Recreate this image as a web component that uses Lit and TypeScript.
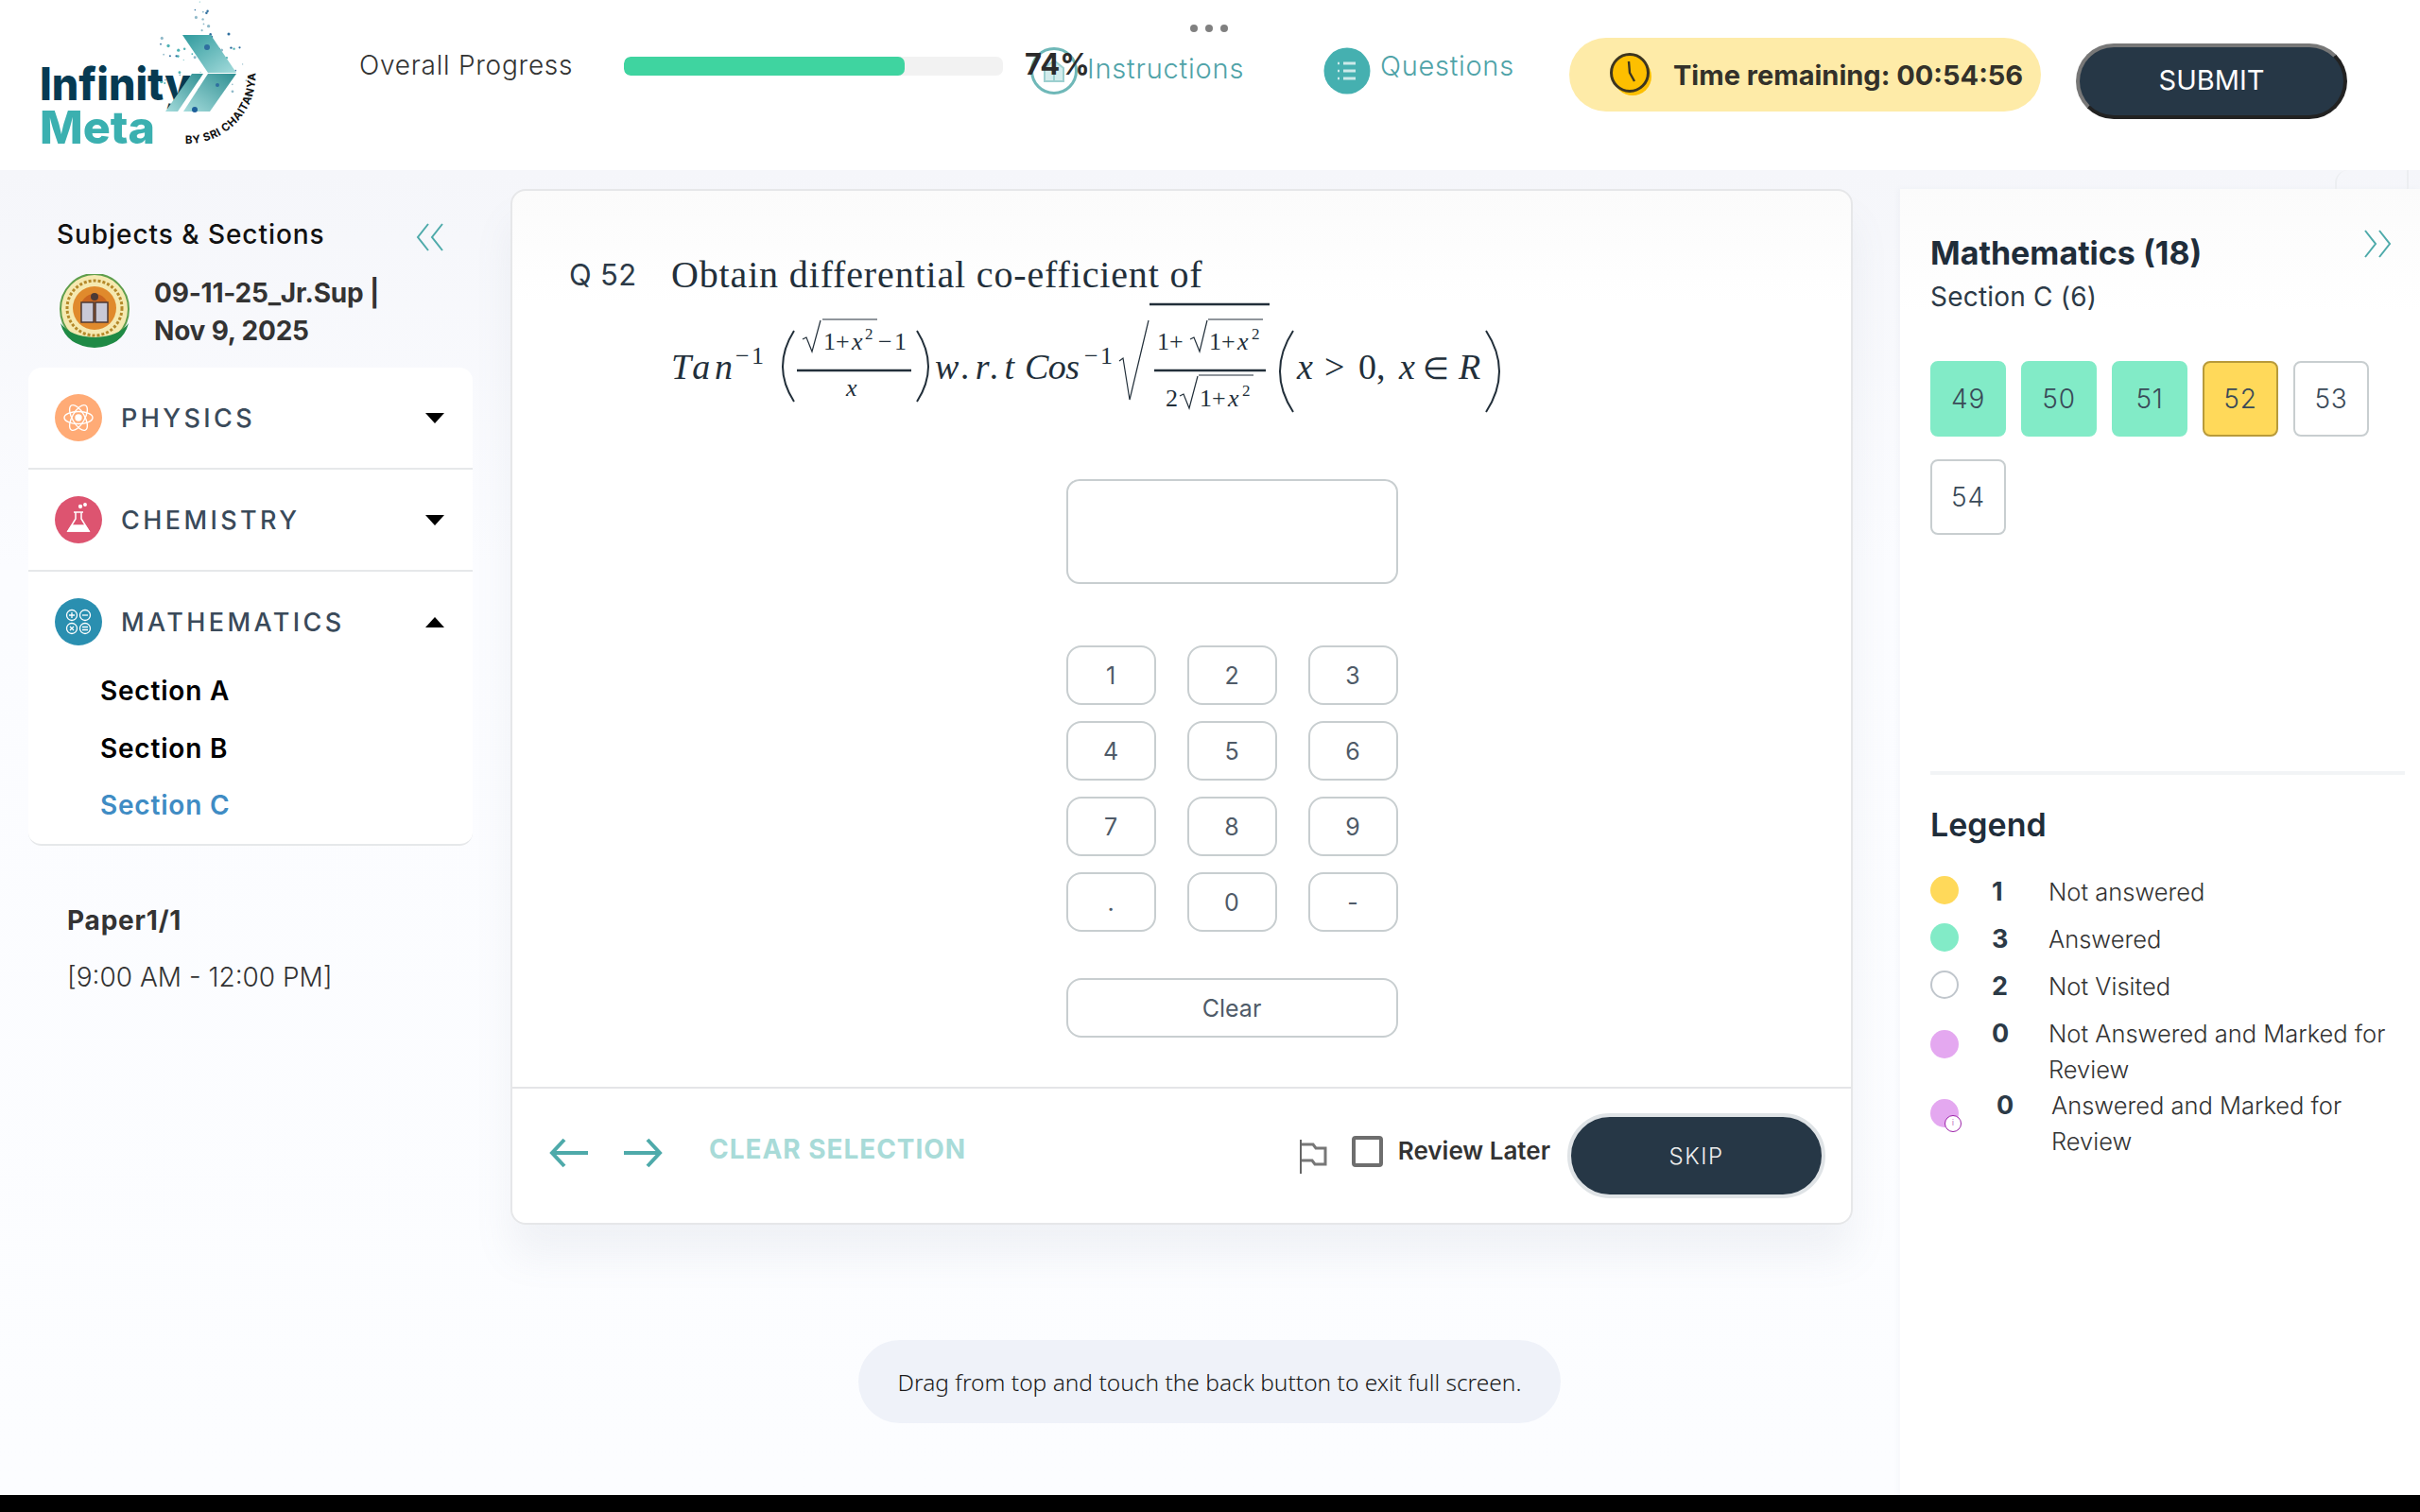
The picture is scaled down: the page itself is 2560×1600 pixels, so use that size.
import { LitElement, css, html, svg } from "lit";
import { customElement } from "lit/decorators.js";

const TEAL = "#4eaaaa";

// scatter of particles around the logo chevron, fixed seed so it stays stable
function particles() {
  const out = [];
  let s = 11;
  const rnd = () => {
    s = (s * 16807) % 2147483647;
    return s / 2147483647;
  };
  for (let i = 0; i < 80; i++) {
    const x = 170 + rnd() * 95;
    const y = 2 + rnd() * 100;
    // keep the particles in a rough cloud narrowing towards the top
    if (y < 40 && (x < 190 + (40 - y) / 2 || x > 245 - (40 - y) / 3)) continue;
    const r = 0.5 + rnd() * 1.2;
    const c = i % 3 === 0 ? "#2f6f9f" : i % 3 === 1 ? "#4fb3b5" : "#8fb9c9";
    out.push(svg`<circle cx=${x} cy=${y} r=${r} fill=${c}></circle>`);
  }
  return out;
}

const logo = html`<svg class="logo" viewBox="0 0 290 180" width="290" height="180">
  <defs>
    <linearGradient id="chev" x1="0" y1="0" x2="1" y2="1">
      <stop offset="0" stop-color="#2f9a9d"></stop>
      <stop offset="1" stop-color="#a5dcdc"></stop>
    </linearGradient>
    <linearGradient id="chev2" x1="1" y1="0" x2="0" y2="1">
      <stop offset="0" stop-color="#2f8f92"></stop>
      <stop offset="1" stop-color="#a5dcdc"></stop>
    </linearGradient>
  </defs>
  ${particles()}
  <text x="42" y="106" class="lg-a" textLength="160" lengthAdjust="spacingAndGlyphs">Infinity</text>
  <polygon points="193,37 223,37 250,77 220,77" fill="url(#chev)"></polygon>
  <polygon points="220,78 250,78 222,118 194,118" fill="url(#chev2)"></polygon>
  <polygon points="203,78 215,78 188,118 175,118" fill="url(#chev2)"></polygon>
  <circle cx="219" cy="50" r="3" fill="#2f6f9f"></circle>
  <circle cx="206" cy="116" r="3" fill="#1d5f9a"></circle>
  <circle cx="230" cy="90" r="2" fill="#2f6f9f"></circle>
  <text x="42" y="152" class="lg-b" textLength="122" lengthAdjust="spacingAndGlyphs">Meta</text>
  <path id="arc" d="M196 152 A72 72 0 0 0 270 74" fill="none"></path>
  <text class="lg-c"><textPath href="#arc">BY SRI CHAITANYA</textPath></text>
</svg>`;

const seal = html`<svg viewBox="0 0 76 80" width="76" height="80">
  <ellipse cx="38" cy="37" rx="36" ry="37" fill="#f5e9b0" stroke="#5f9e4c" stroke-width="2"></ellipse>
  <circle cx="38" cy="36" r="29" fill="none" stroke="#b5892a" stroke-width="3" stroke-dasharray="3 2"></circle>
  <circle cx="38" cy="36" r="23" fill="#e08a2c"></circle>
  <circle cx="38" cy="36" r="15" fill="#c9651f"></circle>
  <rect x="24" y="30" width="13" height="21" fill="#c9c9d6" stroke="#4c3a36" stroke-width="1.5"></rect>
  <rect x="39" y="30" width="13" height="21" fill="#c9c9d6" stroke="#4c3a36" stroke-width="1.5"></rect>
  <circle cx="38" cy="24" r="4" fill="#4c3a36"></circle>
  <path d="M2 52 Q8 76 38 78 Q68 76 74 52 Q64 66 38 67 Q12 66 2 52Z" fill="#1f8a45"></path>
</svg>`;

const chevrons = (dir: "left" | "right") =>
  html`<svg class="chev" viewBox="0 0 30 30" width="30" height="30">
    <path
      d=${dir === "left" ? "M13 1 L2 15 L13 29 M28 1 L17 15 L28 29" : "M2 1 L13 15 L2 29 M17 1 L28 15 L17 29"}
      fill="none"
      stroke="#4eaaaa"
      stroke-width="2"
    ></path>
  </svg>`;

const atom = svg`<g fill="none" stroke="#fff" stroke-width="1.4">
  <ellipse cx="25" cy="25" rx="15" ry="6.5"></ellipse>
  <ellipse cx="25" cy="25" rx="15" ry="6.5" transform="rotate(60 25 25)"></ellipse>
  <ellipse cx="25" cy="25" rx="15" ry="6.5" transform="rotate(120 25 25)"></ellipse>
  <circle cx="25" cy="25" r="3" fill="#fff"></circle></g>`;

const flask = svg`<g fill="none" stroke="#fff" stroke-width="1.5">
  <path d="M22 17 V24 L14 37 H36 L28 24 V17 M20 17 H30"></path>
  <path d="M18 31 H32 L36 37 H14Z" fill="#fff"></path>
  <circle cx="27" cy="11" r="1.4" fill="#fff"></circle>
  <circle cx="32" cy="9" r="1.2" fill="#fff"></circle></g>`;

const ops = svg`<g fill="none" stroke="#fff" stroke-width="1.3">
  <circle cx="18" cy="18" r="5.5"></circle><path d="M15 18 H21 M18 15 V21"></path>
  <circle cx="32" cy="18" r="5.5"></circle><path d="M29 18 H35"></path>
  <circle cx="18" cy="32" r="5.5"></circle><path d="M16 30 L20 34 M20 30 L16 34"></path>
  <circle cx="32" cy="32" r="5.5"></circle><path d="M29 30.5 H35 M29 33.5 H35"></path></g>`;

const subjects = [
  { name: "PHYSICS", color: "#ffab76", icon: atom, open: false },
  { name: "CHEMISTRY", color: "#dd5470", icon: flask, open: false },
  { name: "MATHEMATICS", color: "#2a8fb0", icon: ops, open: true },
];

const palette = [
  { n: "49", cls: "done" },
  { n: "50", cls: "done" },
  { n: "51", cls: "done" },
  { n: "52", cls: "now" },
  { n: "53", cls: "" },
  { n: "54", cls: "" },
];

const legend = [
  { cls: "c-yellow", n: "1", label: "Not answered", row: "" },
  { cls: "c-green", n: "3", label: "Answered", row: "" },
  { cls: "c-empty", n: "2", label: "Not Visited", row: "" },
  { cls: "c-pink", n: "0", label: "Not Answered and Marked for Review", row: "r4" },
  { cls: "c-pink", n: "0", label: "Answered and Marked for Review", row: "r5" },
];

const keys = ["1", "2", "3", "4", "5", "6", "7", "8", "9", ".", "0", "-"];

// the formula is typeset on its own little canvas, coordinates follow the page
const formula = html`<svg class="formula" viewBox="710 310 890 130" width="890" height="130">
  <g class="m">
    <text x="710" y="398" class="it" font-size="38" textLength="65">Tan</text>
    <text x="778" y="382" font-size="26" textLength="30">−1</text>
    <path class="d" d="M840 347 Q816 385 840 422"></path>
    <path class="d" d="M970 347 Q994 385 970 422"></path>
    <path class="r" d="M843 389 H964"></path>
    <path class="t" d="M849 356 L853 354 L859 369 L868 336"></path>
    <path class="t" d="M870 335 H928"></path>
    <text x="871" y="367" font-size="26">1+</text>
    <text x="901" y="367" class="it" font-size="26">x</text>
    <text x="915" y="356" font-size="17">2</text>
    <text x="929" y="367" font-size="26" textLength="30">−1</text>
    <text x="895" y="416" class="it" font-size="26">x</text>
    <text x="989" y="398" class="it" font-size="38" textLength="84">w.r.t</text>
    <text x="1084" y="398" class="it" font-size="38" textLength="58">Cos</text>
    <text x="1147" y="382" font-size="26" textLength="30">−1</text>
    <path class="t" d="M1184 379 L1188 376 L1195 420 L1215 336"></path>
    <path class="r" d="M1216 319 H1343"></path>
    <text x="1224" y="367" font-size="26">1+</text>
    <path class="t" d="M1259 356 L1263 354 L1269 369 L1277 336"></path>
    <path class="t" d="M1278 335 H1336"></path>
    <text x="1279" y="367" font-size="26">1+</text>
    <text x="1309" y="367" class="it" font-size="26">x</text>
    <text x="1324" y="356" font-size="17">2</text>
    <path class="r" d="M1221 389 H1339"></path>
    <text x="1233" y="427" font-size="26">2</text>
    <path class="t" d="M1248 416 L1252 414 L1258 429 L1267 395"></path>
    <path class="t" d="M1268 394 H1326"></path>
    <text x="1269" y="427" font-size="26">1+</text>
    <text x="1299" y="427" class="it" font-size="26">x</text>
    <text x="1314" y="416" font-size="17">2</text>
    <path class="d" d="M1368 347 Q1340 390 1368 433"></path>
    <path class="d" d="M1572 347 Q1600 390 1572 433"></path>
    <text x="1372" y="398" class="it" font-size="38">x</text>
    <text x="1401" y="398" font-size="38">&gt;</text>
    <text x="1437" y="398" font-size="38">0,</text>
    <text x="1480" y="398" class="it" font-size="38">x</text>
    <text x="1505" y="398" font-size="32" font-family="DejaVu Sans">∈</text>
    <text x="1543" y="398" class="it" font-size="38">R</text>
  </g>
</svg>`;

@customElement("app-root")
export class AppRoot extends LitElement {
  static styles = css`
    :host {
      display: block;
      width: 2560px;
      height: 1600px;
      overflow: hidden;
      font-family: Inter, "Noto Sans", sans-serif;
      color: #263746;
      position: relative;
      background: #000;
    }
    * {
      box-sizing: border-box;
    }
    svg {
      display: block;
      flex: none;
    }

    /* top bar */
    .top {
      height: 180px;
      background: #fff;
      display: flex;
      align-items: flex-start;
      white-space: nowrap;
      position: relative;
    }
    .lg-a {
      font: 800 48px Inter, sans-serif;
      fill: #063a52;
    }
    .lg-b {
      font: 800 48px Inter, sans-serif;
      fill: #3bb0b0;
    }
    .lg-c {
      font: 700 11.5px Inter, sans-serif;
      letter-spacing: 0.6px;
      fill: #111;
    }
    .dots {
      position: absolute;
      left: 1259px;
      top: 26px;
      display: flex;
      gap: 8px;
    }
    .dots i {
      width: 8px;
      height: 8px;
      border-radius: 50%;
      background: #808080;
    }
    .overall {
      margin: 51px 0 0 90px;
      width: 280px;
      font-size: 28px;
      line-height: 36px;
      font-weight: 300;
      letter-spacing: 0.75px;
      color: #333;
    }
    .track {
      margin-top: 60px;
      width: 401px;
      height: 20px;
      border-radius: 7px;
      background: #f2f2f2;
      overflow: hidden;
    }
    .fill {
      height: 100%;
      border-radius: 7px;
      background: #3fd4a0;
    }
    .pct {
      margin: 50px 0 0 23px;
      width: 66px;
      font-size: 31px;
      line-height: 36px;
      font-weight: 700;
      color: #2b2b2b;
      position: relative;
      z-index: 1;
    }
    .tab {
      display: flex;
      align-items: center;
      gap: 10px;
      margin-top: 50px;
      height: 50px;
      font-size: 29px;
      font-weight: 300;
      color: #4fa3a8;
    }
    .tab.ins {
      margin-left: -60px;
      width: 310px;
      letter-spacing: 0.8px;
    }
    .tab.ins span {
      margin-top: -5px;
    }
    .tab.q {
      width: 260px;
      letter-spacing: 0.7px;
    }
    .tab.q span {
      margin-top: -12px;
    }
    .timer {
      width: 499px;
      height: 78px;
      margin-top: 40px;
      border-radius: 39px;
      background: #feeba8;
      display: flex;
      align-items: center;
      padding-left: 43px;
      gap: 21px;
      font-size: 29px;
      font-weight: 700;
      color: #33312a;
    }
    .submit {
      width: 287px;
      height: 80px;
      margin: 46px 0 0 37px;
      padding-bottom: 3px;
      border-radius: 40px;
      background: #263746;
      border: 4px solid;
      border-color: #777 #222 #222 #777;
      color: #fff;
      font: 400 29px Inter, sans-serif;
      display: flex;
      align-items: center;
      justify-content: center;
    }

    /* page body */
    .body {
      height: 1402px;
      display: grid;
      grid-template-columns: 540px 1420px 600px;
      background: linear-gradient(180deg, #f5f6fa 0%, #fbfcff 30%, #fcfdff 100%);
      white-space: nowrap;
    }

    /* left column */
    .side {
      padding-top: 50px;
    }
    .side-head {
      display: flex;
      justify-content: space-between;
      align-items: center;
      padding: 0 70px 0 60px;
      height: 36px;
      font-size: 28px;
      font-weight: 500;
      letter-spacing: 0.95px;
      color: #111;
    }
    .side-head svg {
      margin-top: 6px;
    }
    .exam {
      display: flex;
      gap: 25px;
      margin: 24px 0 0 62px;
      font-size: 28px;
      line-height: 40px;
      font-weight: 700;
      letter-spacing: -0.2px;
      color: #333;
    }
    .subjects {
      margin: 19px 0 0 30px;
      width: 470px;
      background: #fff;
      border-radius: 14px;
      border-bottom: 2px solid #e6e8ea;
    }
    .subject {
      border-bottom: 2px solid #e6e8ea;
    }
    .subject:last-child {
      border-bottom: 0;
    }
    .subject-head {
      display: flex;
      align-items: center;
      height: 106px;
      padding: 0 30px 0 28px;
      font-size: 27px;
      font-weight: 500;
      letter-spacing: 3.4px;
      color: #3a4a5a;
    }
    .subject-head svg {
      margin-right: 20px;
    }
    .caret {
      margin-left: auto;
      width: 0;
      height: 0;
      border-left: 10px solid transparent;
      border-right: 10px solid transparent;
      border-top: 11px solid #000;
    }
    .caret.up {
      border-top: 0;
      border-bottom: 11px solid #000;
    }
    .sections {
      margin-top: -2px;
      padding: 0 0 19px 76px;
      display: flex;
      flex-direction: column;
      gap: 16.5px;
    }
    .sections div {
      height: 44px;
      line-height: 44px;
      font-size: 28px;
      font-weight: 600;
      letter-spacing: 0.8px;
      color: #000;
    }
    .sections .on {
      color: #3f8cc4;
    }
    .paper {
      margin: 59px 0 0 71px;
      font-size: 28px;
      line-height: 40px;
      color: #333;
    }
    .paper b {
      display: block;
      font-weight: 700;
      letter-spacing: 0.8px;
      margin-bottom: 20px;
    }
    .paper span {
      font-weight: 300;
    }

    /* question card */
    .card {
      margin-top: 20px;
      height: 1096px;
      background: linear-gradient(180deg, #fbfbfb 0, #fff 120px);
      border: 2px solid #e6e7e9;
      border-radius: 16px;
      box-shadow: 0 34px 40px rgba(120, 130, 160, 0.09);
      display: flex;
      flex-direction: column;
      color: #2c3a47;
    }
    .question {
      height: 950px;
      display: flex;
      padding: 66px 62px 0 60px;
      border-bottom: 2px solid #e4e5e7;
    }
    .qno {
      width: 108px;
      font-size: 31px;
      line-height: 46px;
      letter-spacing: 0.3px;
      font-weight: 400;
    }
    .qbody {
      flex: 1;
      display: flex;
      flex-direction: column;
      align-items: center;
    }
    .qtext {
      align-self: stretch;
      font: 40px/46px "Liberation Serif", serif;
      letter-spacing: 0.85px;
      color: #222f3a;
    }
    .formula {
      align-self: flex-start;
      margin-top: -1px;
    }
    .m text {
      font-family: "Liberation Serif", serif;
      fill: #222f3a;
    }
    .m .it {
      font-style: italic;
    }
    .m path {
      fill: none;
      stroke: #222f3a;
    }
    .m .r {
      stroke-width: 2.4;
    }
    .m .t {
      stroke-width: 1.2;
    }
    .m .d {
      stroke-width: 2;
    }
    .answer {
      width: 351px;
      height: 111px;
      margin-top: 64px;
      border: 2px solid #c8ced0;
      border-radius: 14px;
    }
    .keys {
      width: 351px;
      margin-top: 65px;
      display: grid;
      grid-template-columns: repeat(3, 95px);
      grid-auto-rows: 63px;
      column-gap: 33px;
      row-gap: 17px;
    }
    .key,
    .clear {
      border: 2px solid #c8ced0;
      border-radius: 16px;
      display: flex;
      align-items: center;
      justify-content: center;
      font-size: 25px;
      color: #4f5b68;
    }
    .clear {
      width: 351px;
      height: 63px;
      margin-top: 49px;
    }
    .foot {
      flex: 1;
      display: flex;
      align-items: center;
      padding: 0 27px 0 39px;
    }
    .foot .arrow {
      margin-bottom: 6px;
    }
    .foot .arrow + .arrow {
      margin-left: 36px;
    }
    .clearsel {
      margin: 0 0 14px 49px;
      font-size: 28px;
      font-weight: 700;
      letter-spacing: 0.95px;
      color: #a8dbd8;
    }
    .flag {
      margin: 0 0 -2px auto;
    }
    .check {
      width: 33px;
      height: 33px;
      margin: 0 0 10px 26px;
      border: 4px solid #6e6e6e;
      border-radius: 4px;
      background: #fff;
    }
    .later {
      margin: 0 0 12px 16px;
      font-size: 26px;
      font-weight: 600;
      color: #333;
    }
    .skip {
      width: 273px;
      height: 90px;
      margin-left: 18px;
      border-radius: 45px;
      border: 4px solid #dfe3e6;
      background: #263746;
      color: #eee;
      font-size: 24px;
      font-weight: 300;
      letter-spacing: 1.5px;
      display: flex;
      align-items: center;
      justify-content: center;
    }

    /* right panel */
    .panel {
      margin: 20px 0 0 50px;
      width: 550px;
      background: linear-gradient(180deg, #fbfbfb 0, #fff 130px);
      box-shadow: -2px 0 6px rgba(120, 130, 160, 0.05);
      padding: 46px 16px 0 32px;
      position: relative;
    }
    .collapse {
      position: absolute;
      right: 12px;
      top: -20px;
      width: 78px;
      height: 20px;
      border: 2px solid #eceef1;
      border-bottom: 0;
      border-top: 0;
      border-radius: 14px 0 0 0;
    }
    .expand {
      position: absolute;
      right: 30px;
      top: 43px;
    }
    .panel h2 {
      margin: 0;
      font-size: 34px;
      line-height: 44px;
      font-weight: 700;
      color: #1f2d3a;
    }
    .panel h3 {
      margin: 4px 0 0;
      font-size: 28px;
      line-height: 40px;
      font-weight: 400;
      letter-spacing: 0.2px;
      color: #2c3a47;
    }
    .grid {
      margin-top: 48px;
      height: 438px;
      display: flex;
      flex-wrap: wrap;
      align-content: flex-start;
      gap: 24px 16px;
      border-bottom: 4px solid #f2f4f6;
    }
    .qbox {
      width: 80px;
      height: 80px;
      border: 2px solid #c8ced0;
      border-radius: 8px;
      display: flex;
      align-items: center;
      justify-content: center;
      font-size: 28px;
      font-weight: 300;
      letter-spacing: 0.8px;
      color: #3a4a58;
    }
    .qbox.done {
      background: #82ebc7;
      border-color: #82ebc7;
    }
    .qbox.now {
      background: #ffd95a;
      border-color: #b89a3a;
    }
    .legend-title {
      margin: 31px 0 0;
      font-size: 34px;
      line-height: 44px;
      font-weight: 600;
      color: #1f2d3a;
    }
    .legend {
      margin-top: 30px;
    }
    .row {
      display: grid;
      grid-template-columns: 65px 60px 1fr;
      min-height: 50px;
      font-size: 25.5px;
      line-height: 38px;
      font-weight: 300;
      color: #333;
      white-space: normal;
    }
    .row b {
      font-size: 27px;
      font-weight: 700;
      color: #2c3a47;
    }
    .dot {
      width: 30px;
      height: 30px;
      margin-top: 2px;
      border-radius: 50%;
      position: relative;
    }
    .row.r4 .dot {
      margin-top: 15px;
    }
    .row.r5 {
      grid-template-columns: 70px 58px 1fr;
    }
    .row.r5 .dot {
      margin-top: 12px;
    }
    .c-yellow {
      background: #ffd95a;
    }
    .c-green {
      background: #82ebc7;
    }
    .c-empty {
      background: #fff;
      border: 2px solid #c0c6cc;
    }
    .c-pink {
      background: #e4a8f0;
    }
    .badge {
      position: absolute;
      left: 15px;
      top: 17px;
      width: 18px;
      height: 18px;
      border-radius: 50%;
      border: 1.5px solid #9b1fa8;
      background: #fff;
      font-size: 8px;
      line-height: 15px;
      text-align: center;
      color: #9b1fa8;
    }

    .toast {
      position: absolute;
      left: 908px;
      top: 1418px;
      width: 743px;
      height: 88px;
      border-radius: 44px;
      background: #eff2f9;
      display: flex;
      align-items: center;
      justify-content: center;
      font: 300 24.5px "Noto Sans", sans-serif;
      color: #1a1a1a;
      white-space: nowrap;
    }
  `;

  render() {
    return html`
      <div class="top">
        ${logo}
        <div class="overall">Overall Progress</div>
        <div class="track"><div class="fill" style="width:74%"></div></div>
        <div class="pct">74%</div>
        <div class="tab ins">
          <svg viewBox="0 0 50 50" width="50" height="50">
            <circle cx="25" cy="25" r="23.5" fill="none" stroke="#6fb8b8" stroke-width="3"></circle>
            <path d="M15 36 V22 L25 14 L35 22 V36 H15Z M25 24 V36" fill="#d3ecec" stroke="#9ccfcf" stroke-width="2"></path>
          </svg>
          <span>Instructions</span>
        </div>
        <div class="tab q">
          <svg viewBox="0 0 50 50" width="50" height="50">
            <circle cx="25" cy="25" r="24.5" fill="#45b0b0"></circle>
            <path d="M21 17 H34 M21 25 H34 M21 33 H34" stroke="#cdeaea" stroke-width="3"></path>
            <path d="M15 17 H17 M15 25 H17 M15 33 H17" stroke="#cdeaea" stroke-width="2.4"></path>
          </svg>
          <span>Questions</span>
        </div>
        <div class="timer">
          <svg viewBox="0 0 46 46" width="46" height="46">
            <circle cx="24" cy="25" r="20" fill="#fdbf00"></circle>
            <circle cx="21" cy="21" r="19.5" fill="#fdbf00" stroke="#3c3520" stroke-width="3"></circle>
            <path d="M20 9 L21 21 L26 30" fill="none" stroke="#3c3520" stroke-width="2.4"></path>
          </svg>
          <span>Time remaining: 00:54:56</span>
        </div>
        <div class="submit">SUBMIT</div>
        <div class="dots"><i></i><i></i><i></i></div>
      </div>

      <div class="body">
        <aside class="side">
          <div class="side-head"><span>Subjects &amp; Sections</span>${chevrons("left")}</div>
          <div class="exam">${seal}<div>09-11-25_Jr.Sup |<br />Nov 9, 2025</div></div>
          <div class="subjects">
            ${subjects.map(
              (s) => html`<div class="subject">
                <div class="subject-head">
                  <svg viewBox="0 0 50 50" width="50" height="50">
                    <circle cx="25" cy="25" r="25" fill=${s.color}></circle>
                    ${s.icon}
                  </svg>
                  <span>${s.name}</span>
                  <i class="caret ${s.open ? "up" : ""}"></i>
                </div>
                ${s.open
                  ? html`<div class="sections">
                      <div>Section A</div>
                      <div>Section B</div>
                      <div class="on">Section C</div>
                    </div>`
                  : ""}
              </div>`
            )}
          </div>
          <div class="paper"><b>Paper1/1</b><span>[9:00 AM - 12:00 PM]</span></div>
        </aside>

        <main class="card">
          <div class="question">
            <div class="qno">Q 52</div>
            <div class="qbody">
              <div class="qtext">Obtain differential co-efficient of</div>
              ${formula}
              <div class="answer"></div>
              <div class="keys">${keys.map((k) => html`<div class="key">${k}</div>`)}</div>
              <div class="clear">Clear</div>
            </div>
          </div>
          <div class="foot">
            <svg class="arrow" viewBox="0 0 42 32" width="42" height="32">
              <path d="M41 16 H3 M16 2 L3 16 L16 30" fill="none" stroke=${TEAL} stroke-width="4"></path>
            </svg>
            <svg class="arrow" viewBox="0 0 42 32" width="42" height="32">
              <path d="M1 16 H39 M26 2 L39 16 L26 30" fill="none" stroke=${TEAL} stroke-width="4"></path>
            </svg>
            <div class="clearsel">CLEAR SELECTION</div>
            <svg class="flag" viewBox="0 0 30 36" width="30" height="36">
              <path d="M2 0 V36" stroke="#666" stroke-width="2"></path>
              <path d="M3 5 H15 L18 9 H28 V26 H17 L14 22 H3" fill="none" stroke="#777" stroke-width="3"></path>
            </svg>
            <div class="check"></div>
            <div class="later">Review Later</div>
            <div class="skip">SKIP</div>
          </div>
        </main>

        <aside class="panel">
          <div class="collapse"></div>
          <div class="expand">${chevrons("right")}</div>
          <h2>Mathematics (18)</h2>
          <h3>Section C (6)</h3>
          <div class="grid">
            ${palette.map((p) => html`<div class="qbox ${p.cls}">${p.n}</div>`)}
          </div>
          <div class="legend-title">Legend</div>
          <div class="legend">
            ${legend.map(
              (l) => html`<div class="row ${l.row}">
                <div class="dot ${l.cls}">${l.row === "r5" ? html`<span class="badge">i</span>` : ""}</div>
                <b>${l.n}</b>
                <span>${l.label}</span>
              </div>`
            )}
          </div>
        </aside>
      </div>

      <div class="toast">Drag from top and touch the back button to exit full screen.</div>
    `;
  }
}
